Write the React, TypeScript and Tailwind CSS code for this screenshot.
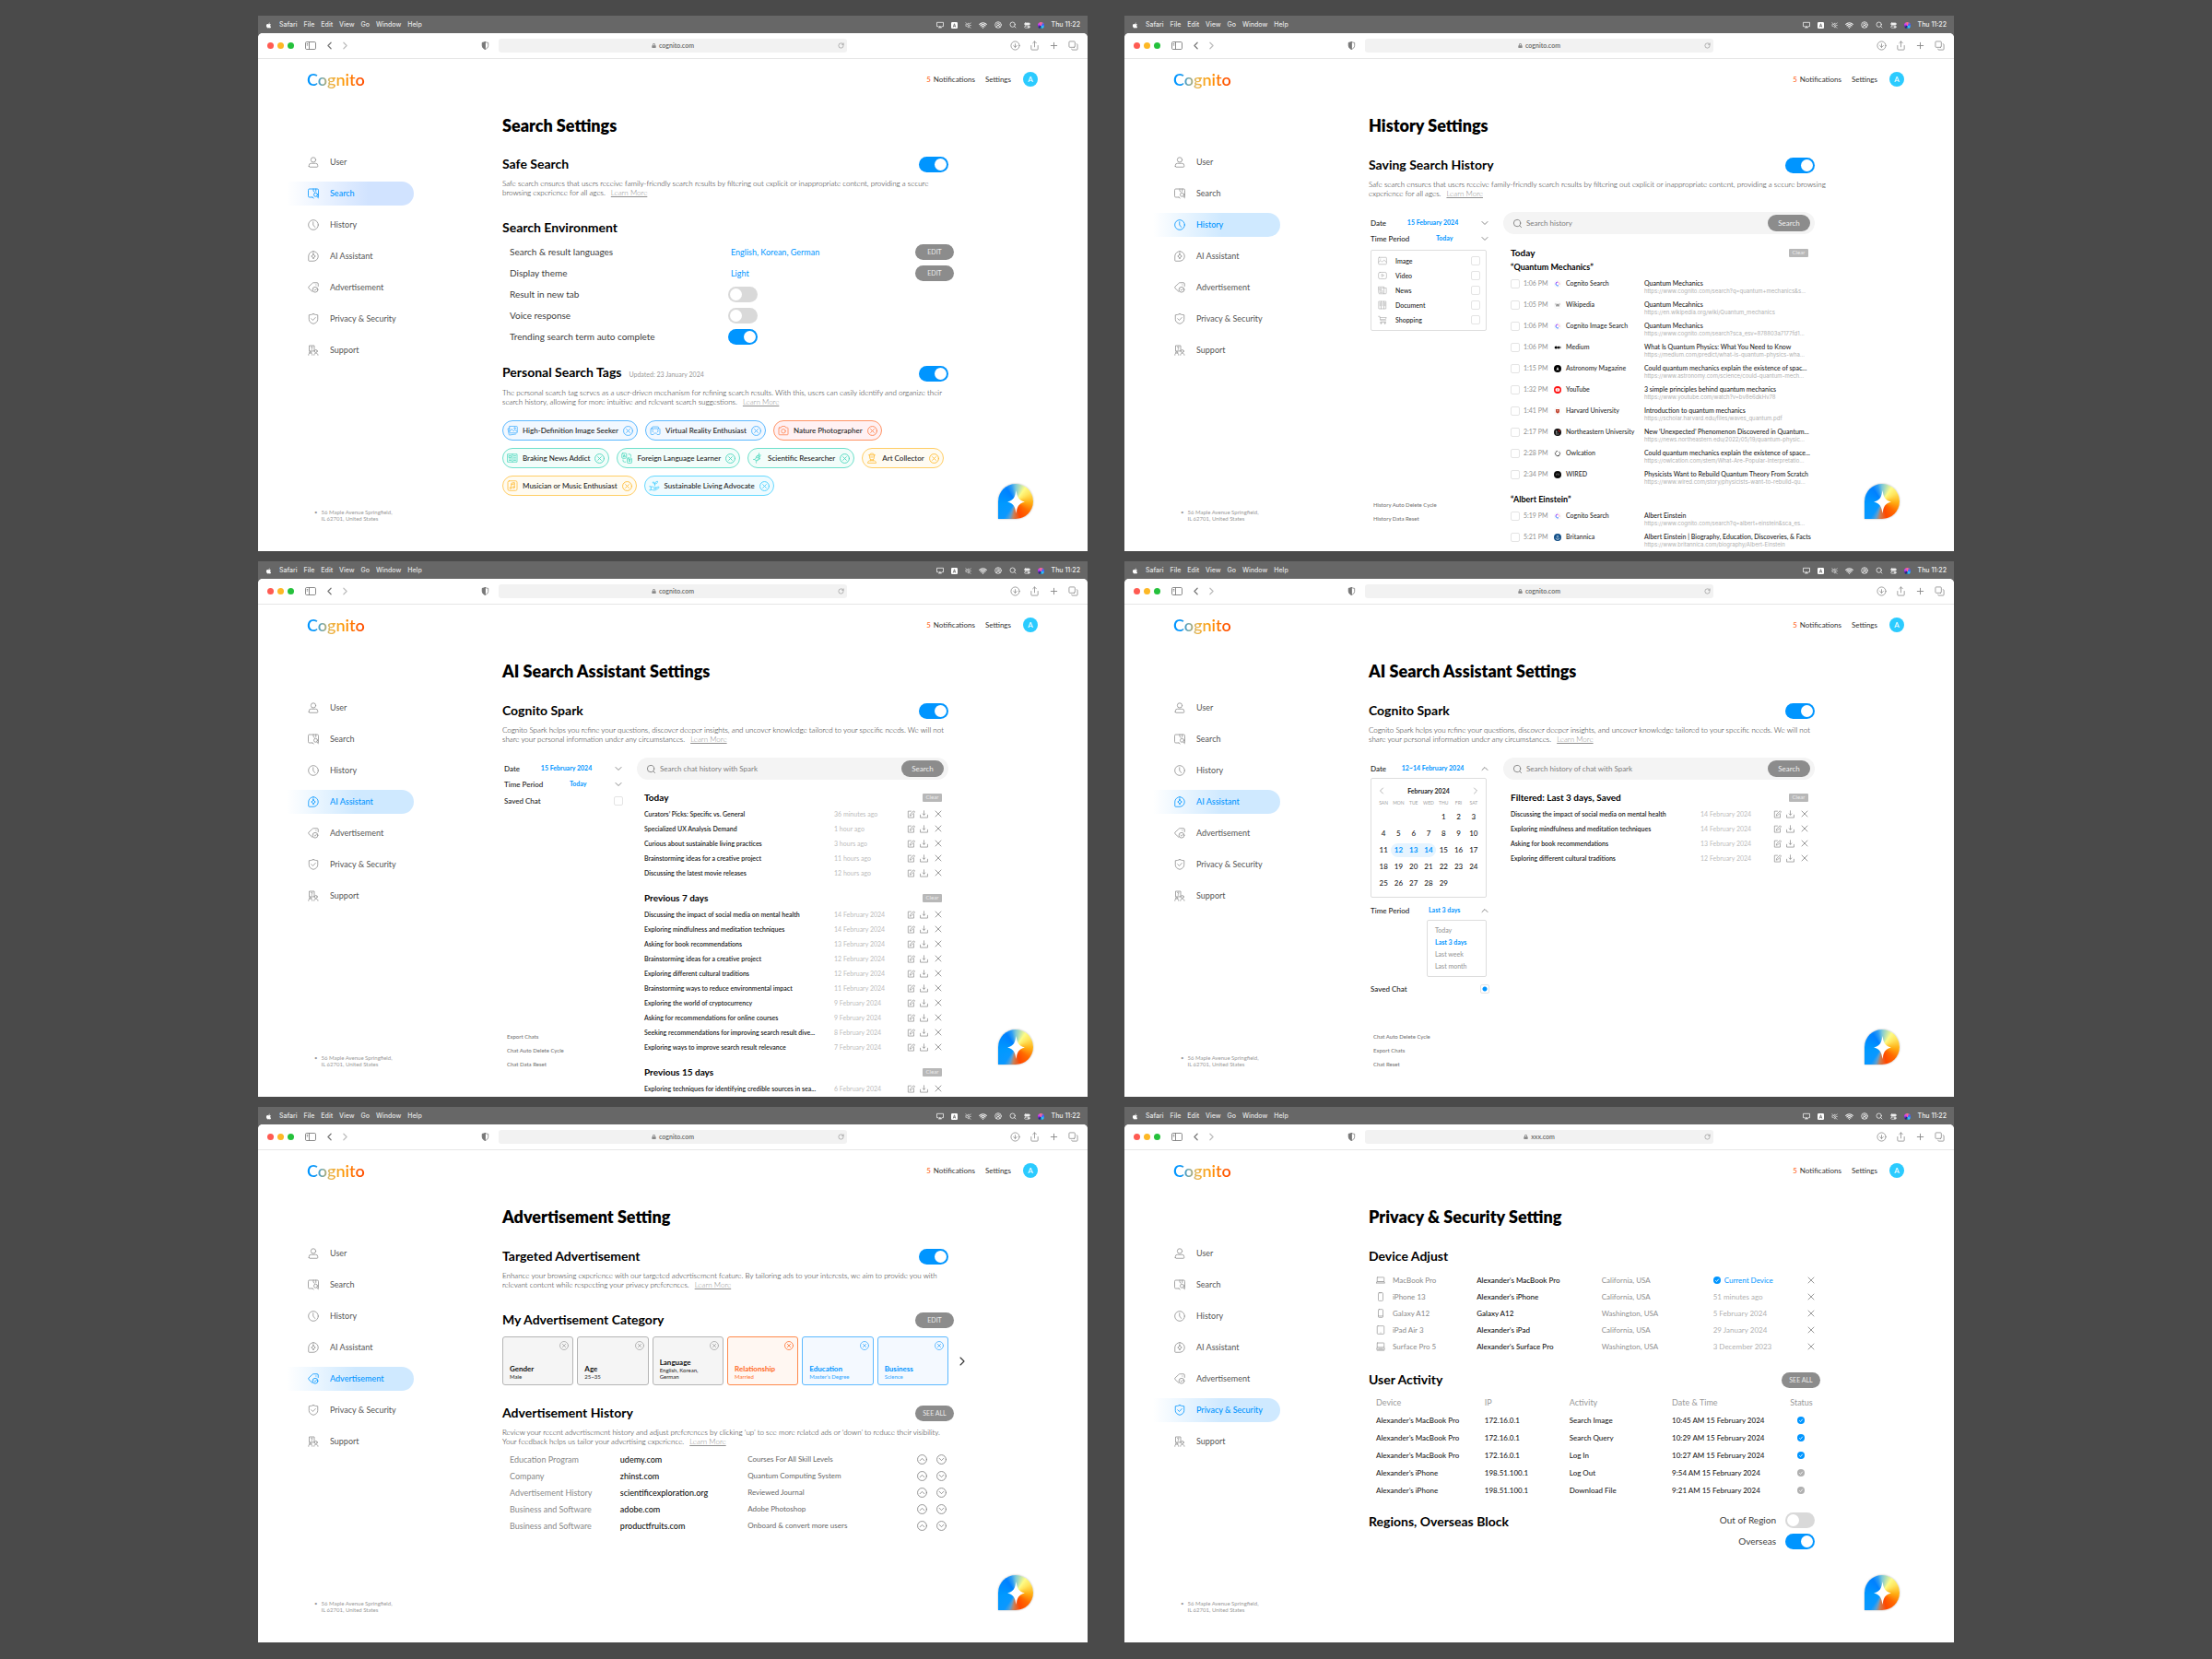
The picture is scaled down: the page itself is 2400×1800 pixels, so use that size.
import React, { useId } from "react";
import {
  ChevronDown,
  ChevronLeft,
  ChevronRight,
  ChevronUp,
  CircleArrowDown,
  CircleUserRound,
  Copy,
  Plus,
  RotateCw,
  Search,
  Share,
  Wifi,
  X,
} from "lucide-react";
import { FaApple, FaLock } from "react-icons/fa";

type IconProps = { className?: string };

function Line({ className = "", width = 1.6, children }: IconProps & { width?: number; children: React.ReactNode }) {
  return (
    <svg
      viewBox="0 0 24 24"
      className={`shrink-0 ${className}`}
      fill="none"
      stroke="currentColor"
      strokeWidth={width}
      strokeLinecap="round"
      strokeLinejoin="round"
      aria-hidden="true"
    >
      {children}
    </svg>
  );
}

/* ---------- sidebar icons ---------- */

const UserIcon = (p: IconProps) => (
  <Line {...p}>
    <circle cx="12" cy="6.8" r="5.3" />
    <path d="M2.5 21v-2a4.5 4.5 0 0 1 4.5-4.5h10A4.5 4.5 0 0 1 21.5 19v2a1.5 1.5 0 0 1-1.5 1.500H4A1.5 1.5 0 0 1 2.5 21Z" />
  </Line>
);
const BookSearchIcon = (p: IconProps) => (
  <Line {...p}>
    <path d="M10 20H3.500a2.500 2.500 0 0 1-2.500-2.500v-13A2.500 2.500 0 0 1 3.500 2h17A2.500 2.500 0 0 1 23 4.500V19" />
    <path d="M12 2v4.500l2.500 2M17.500 2v5M10 20l2.500 2" />
    <circle cx="17" cy="14.500" r="4" />
    <path d="m20 18 3 4" />
  </Line>
);
const ClockIcon = (p: IconProps) => (
  <Line {...p}>
    <circle cx="12" cy="12" r="10.7" />
    <path d="M11.5 5.500V12l4 5" />
  </Line>
);
const SparkChatIcon = (p: IconProps) => (
  <Line {...p}>
    <path d="M12 1.500a10.500 10.500 0 1 1 0 21H3a1.500 1.500 0 0 1-1.500-1.500v-9A10.500 10.500 0 0 1 12 1.500Z" />
    <path d="m12 6 1.800 4.200L16.500 12l-2.700 1.800L12 18l-1.800-4.200L7.500 12l2.700-1.800Z" />
  </Line>
);
const TagIcon = (p: IconProps) => (
  <Line {...p}>
    <path d="M9.500 20.500 2 13.500a2.500 2.500 0 0 1 0-3.500l7.500-7A4 4 0 0 1 12.500 1.500H20A2.500 2.500 0 0 1 22.500 4v5" />
    <circle cx="16" cy="16.500" r="5.800" />
    <path d="m13.800 16.500 1.700 1.700 3-3.200M17.500 6h.6" />
  </Line>
);
const ShieldIcon = (p: IconProps) => (
  <Line {...p}>
    <path d="M12 1.300c3 1.400 6 2 9.500 2.200v9.300c0 4.900-3.800 8.200-9.500 9.900-5.700-1.700-9.500-5-9.500-9.900V3.500C6 3.300 9 2.700 12 1.300Z" />
    <path d="m7.500 11.500 3.500 3.500 5.500-6" />
  </Line>
);
const SupportIcon = (p: IconProps) => (
  <Line {...p}>
    <path d="M3 13V2h11v11Z" />
    <path d="M7 5a1.600 1.600 0 1 1 1.600 2.200v1.300M8.600 10.500v.1M1.500 22.500c0-3 1.500-4.500 4-4.500s4 1.500 4 4.500M3.500 18v-2.500h4V18M13.500 22.500c0-2.500 1.500-4 4-4s4.500 1.500 4.500 4" />
    <circle cx="17.500" cy="14" r="3" />
  </Line>
);

const NAV = [
  { name: "User", icon: UserIcon },
  { name: "Search", icon: BookSearchIcon },
  { name: "History", icon: ClockIcon },
  { name: "AI Assistant", icon: SparkChatIcon },
  { name: "Advertisement", icon: TagIcon },
  { name: "Privacy & Security", icon: ShieldIcon },
  { name: "Support", icon: SupportIcon },
];

/* ---------- shared controls ---------- */

function Toggle({ label, on = false }: { label: string; on?: boolean }) {
  return (
    <input
      type="checkbox"
      role="switch"
      aria-label={label}
      defaultChecked={on}
      className="h-[17px] w-8 shrink-0 cursor-pointer appearance-none rounded-full bg-[#d9d9d9] p-[2px] before:block before:size-[13px] before:rounded-full before:bg-white before:content-[''] checked:bg-[#0095ff] checked:before:ml-[15px]"
    />
  );
}

function Tick({ label, on = false }: { label: string; on?: boolean }) {
  return (
    <input
      type="checkbox"
      aria-label={label}
      defaultChecked={on}
      className="size-[10px] shrink-0 cursor-pointer appearance-none rounded-[2px] border border-[#e4e4e4] bg-white checked:bg-[radial-gradient(circle,#0095ff_2px,transparent_3px)]"
    />
  );
}

function PillButton({ children }: { children: React.ReactNode }) {
  return (
    <button className="-mr-[6px] h-[17px] w-[42px] rounded-full bg-[#8c8c8c] text-[7px] leading-none text-[#ebebeb]">
      {children}
    </button>
  );
}

function ClearButton() {
  return <button className="h-[9px] w-[21px] rounded-[1px] bg-[#b8b8b8] text-[6px] leading-none text-[#ececec]">Clear</button>;
}

function SectionHead({
  title,
  note,
  className = "mt-[21px]",
  children,
}: {
  title: string;
  note?: string;
  className?: string;
  children?: React.ReactNode;
}) {
  return (
    <div className={`flex h-[18px] items-center justify-between ${className}`}>
      <h2 className="text-[14px] font-bold leading-[18px] text-black">
        {title}
        {note && <span className="ml-2 text-[7px] font-normal text-[#999]">{note}</span>}
      </h2>
      {children}
    </div>
  );
}

function Blurb({ lines, className = "mt-[7px]" }: { lines: [string, string]; className?: string }) {
  return (
    <p className={`text-[8px] font-light leading-[10px] text-[#1a1a1a] ${className}`}>
      <span className="block whitespace-nowrap">{lines[0]}</span>
      <span className="flex gap-[6px]">
        {lines[1]}
        <a href="#learn-more" className="text-[#909090] underline">
          Learn More
        </a>
      </span>
    </p>
  );
}

/* ---------- window chrome ---------- */

function MenuBar() {
  return (
    <div className="flex h-[19px] items-center bg-[#676767] pl-2 pr-2 pt-px font-['Inter',sans-serif] text-[7px] font-medium text-[#e4e4e4]">
      <FaApple className="mr-[8px] size-[7px] text-white" aria-hidden="true" />
      <nav aria-label="Menu bar" className="flex gap-[7px]">
        {["Safari", "File", "Edit", "View", "Go", "Window", "Help"].map((m) => (
          <button key={m}>{m}</button>
        ))}
      </nav>
      <div className="ml-auto flex items-center gap-2 text-[#f0f0f0]">
        <Line className="size-[8px]" width={2.4}>
          <path d="M6 17H1.500V4h21v13H18" />
          <path d="m8 20 4-4 4 4Z" fill="currentColor" />
        </Line>
        <svg viewBox="0 0 14 14" className="size-[7px]" aria-hidden="true">
          <rect width="14" height="14" rx="2.500" fill="#fff" />
          <path d="m4.500 11 2.500-7.500L9.500 11M5.500 8.500h3" fill="none" stroke="#676767" strokeWidth="1.600" />
        </svg>
        <Line className="size-[7px]" width={2}>
          <path d="M3 9v6h4l7 6V3L7 9ZM3 2l18 20M17 7l5-4M18 12h4" />
        </Line>
        <Wifi className="size-[9px]" strokeWidth={3} />
        <CircleUserRound className="size-[8px]" strokeWidth={2.400} />
        <Search className="size-[8px]" strokeWidth={2.400} />
        <Line className="size-[7px]" width={2.200}>
          <rect x="2" y="3" width="20" height="7.500" rx="3.700" fill="currentColor" />
          <rect x="2" y="14" width="20" height="7.500" rx="3.700" />
          <circle cx="17" cy="17.700" r="2.500" fill="currentColor" />
        </Line>
        <span className="size-[7px] rounded-full bg-[conic-gradient(#ff6b8b,#3d5bff,#2ed3ff,#1b1f6b,#c23bff,#ff6b8b)]" />
        <time>Thu 11:22</time>
      </div>
    </div>
  );
}

function Toolbar({ url }: { url: string }) {
  return (
    <div className="flex h-7 items-center border-b border-[#e6e6e6] bg-white">
      <div className="flex flex-1 items-center pl-[10px] text-[#777]">
        <div className="flex gap-1">
          <span className="size-[7px] rounded-full bg-[#ff5b52]" />
          <span className="size-[7px] rounded-full bg-[#fdb826]" />
          <span className="size-[7px] rounded-full bg-[#25c13c]" />
        </div>
        <button aria-label="Show sidebar" className="ml-3">
          <svg viewBox="0 0 24 18" className="h-[9px] w-[12px]" fill="none" stroke="currentColor" strokeWidth="1.700" aria-hidden="true">
            <rect x="1" y="1" width="22" height="16" rx="2.500" />
            <path d="M9 1v16M3.500 5h3M3.500 8h3" />
          </svg>
        </button>
        <button aria-label="Back" className="ml-[8px]">
          <ChevronLeft className="size-[13px]" strokeWidth={2.200} />
        </button>
        <button aria-label="Forward" className="ml-1 text-[#bdbdbd]">
          <ChevronRight className="size-[13px]" strokeWidth={2.200} />
        </button>
        <button aria-label="Privacy report" className="ml-auto mr-[10px]">
          <Line className="size-[9px]" width={2}>
            <path d="M12 1.500c3 1.500 6 2 8.500 2.200V12c0 5-3.500 8.500-8.500 10.500C7 20.500 3.500 17 3.500 12V3.700C6 3.500 9 3 12 1.500Z" />
            <path d="M12 1.500v21C7 20.500 3.500 17 3.500 12V3.700C6 3.500 9 3 12 1.500Z" fill="currentColor" />
          </Line>
        </button>
      </div>
      <div className="relative w-[42%] shrink-0">
        <div className="flex h-[15px] items-center justify-center gap-[3px] rounded-[3px] bg-[#f2f2f2] text-[7px] text-[#666]">
          <FaLock className="size-[5px] text-[#8a8a8a]" aria-hidden="true" />
          <span className="font-semibold">{url}</span>
        </div>
        <button aria-label="Reload" className="absolute right-[3px] top-[4px]">
          <RotateCw className="size-[7px] text-[#888]" strokeWidth={2} />
        </button>
      </div>
      <div className="flex flex-1 items-center justify-end gap-[10px] pr-[10px] text-[#888]">
        <button aria-label="Downloads"><CircleArrowDown className="size-[11px]" strokeWidth={1.700} /></button>
        <button aria-label="Share"><Share className="size-[11px]" strokeWidth={1.700} /></button>
        <button aria-label="New tab"><Plus className="size-[11px]" strokeWidth={2} /></button>
        <button aria-label="Tab overview"><Copy className="size-[11px] -scale-x-100 -scale-y-100" strokeWidth={1.700} /></button>
      </div>
    </div>
  );
}

function SparkButton() {
  return (
    <button
      aria-label="Open Cognito Spark"
      className="absolute bottom-[35px] right-[59px] flex size-[38px] items-center justify-center rounded-full rounded-bl-[3px] bg-[conic-gradient(from_0deg,#7cc8d8_0deg,#fdfb86_35deg,#ffe45c_60deg,#ffae12_95deg,#ff6a00_130deg,#ff4800_165deg,#c98058_188deg,#5f9fd0_200deg,#0a98ff_215deg,#0099ff_260deg,#0080ff_325deg,#2f9df2_345deg,#7cc8d8_360deg)] shadow-[0_0_2px_rgba(0,0,0,0.35)]"
    >
      <svg viewBox="0 0 24 32" className="h-[25px] w-[19px]" aria-hidden="true">
        <path d="M12 0c1.500 9 3 13.500 12 16-9 2.500-10.500 7-12 16-1.500-9-3-13.500-12-16C9 13.500 10.500 9 12 0Z" fill="#fff" />
      </svg>
    </button>
  );
}

function activeTone(name: string) {
  return name === "Search" ? "bg-linear-[90deg,#ffffff_2%,#d1e3ff_65%]" : "bg-linear-[90deg,#ffffff_2%,#cfe9ff_55%]";
}

function BrowserWindow({
  active,
  title,
  url = "cognito.com",
  children,
}: {
  active: string;
  title: string;
  url?: string;
  children: React.ReactNode;
}) {
  return (
    <section aria-label={title} className="relative flex flex-col overflow-hidden bg-[#676767]">
      <MenuBar />
      <div className="flex grow flex-col overflow-hidden rounded-t-[5px] bg-white">
        <Toolbar url={url} />
        <header className="flex h-[45px] shrink-0 items-center pb-px pl-[53px] pr-[54px]">
          <a
            href="#home"
            className="bg-linear-[90deg,#0095ff_12%,#e9b752_40%,#ff9800_65%,#ff5000_92%] bg-clip-text pb-px text-[18px] font-semibold leading-[24px] text-transparent"
          >
            Cognito
          </a>
          <nav aria-label="Account" className="ml-auto flex items-center text-[8px] text-[#333]">
            <a href="#notifications">
              <span className="mr-[3px] font-medium text-[#ff6a1f]">5</span>Notifications
            </a>
            <a href="#settings" className="ml-[11px]">
              Settings
            </a>
            <button aria-label="Account A" className="ml-[13px] size-4 rounded-full bg-[#2bcbff] text-[8px] font-medium leading-none text-white">
              A
            </button>
          </nav>
        </header>
        <div className="grid grow grid-cols-[265fr_484fr_151fr]">
          <aside className="flex flex-col items-start pb-8 pl-7 pt-[54px]">
            <nav aria-label="Settings sections" className="flex w-[141px] flex-col gap-2">
              {NAV.map(({ name, icon: Icon }) => (
                <a
                  key={name}
                  href={`#${name.toLowerCase().replace(/\W+/g, "-")}`}
                  aria-current={name === active ? "page" : undefined}
                  className={`flex h-[26px] items-center gap-3 rounded-r-full pl-[26px] text-[9px] ${
                    name === active ? `font-medium text-[#0095ff] ${activeTone(name)}` : "text-[#555]"
                  }`}
                >
                  <Icon className={name === active ? "size-3" : "size-3 text-[#8f8f8f]"} />
                  {name}
                </a>
              ))}
            </nav>
            <address className="mt-auto flex pl-[33px] text-[6px] not-italic leading-[7px] text-[#999]">
              <span className="mr-[4px]">•</span>
              <span>
                56 Maple Avenue Springfield,
                <br />
                IL 62701, United States
              </span>
            </address>
          </aside>
          <main className="flex min-w-0 flex-col pt-[15px]">
            <h1 className="text-[18px] font-extrabold leading-[24px] text-black">{title}</h1>
            {children}
          </main>
        </div>
      </div>
      <SparkButton />
    </section>
  );
}

/* ---------- search settings ---------- */

const TONES = {
  blue: { box: "border-[#5db9ff] bg-[#f2f8ff]", ink: "text-[#4db2ff]" },
  red: { box: "border-[#ff9466] bg-[#fff1f3]", ink: "text-[#ff8450]" },
  green: { box: "border-[#6ee0cb] bg-[#f2fdfa]", ink: "text-[#4dd8be]" },
  amber: { box: "border-[#ffce66] bg-[#fffbf1]", ink: "text-[#ffbd38]" },
  cyan: { box: "border-[#66d9ff] bg-[#effbff]", ink: "text-[#48cfff]" },
};

const TAGS: { name: string; tone: keyof typeof TONES; art: React.ReactNode }[] = [
  {
    name: "High-Definition Image Seeker",
    tone: "blue",
    art: (
      <>
        <path d="M6 3h15a1.500 1.500 0 0 1 1.500 1.500V16a1.500 1.500 0 0 1-1.500 1.500H7A1.500 1.500 0 0 1 5.500 16V3.500M5.500 7 2 8l2.500 13a1 1 0 0 0 1 1L19 20M6 14l4.500-5 4 4.500 3-3 4.500 4" />
        <circle cx="17" cy="7" r="1.500" />
      </>
    ),
  },
  {
    name: "Virtual Reality Enthusiast",
    tone: "blue",
    art: (
      <>
        <path d="M5 8V6a2 2 0 0 1 2-2h10a2 2 0 0 1 2 2v2M3.500 8h17A1.500 1.500 0 0 1 22 9.500V19a2 2 0 0 1-2 2h-4l-4-4-4 4H4a2 2 0 0 1-2-2V9.500A1.500 1.500 0 0 1 3.500 8Z" />
        <path d="m7 11-1.500 2.500L8 16M17 11l1.500 2.500L16 16" />
      </>
    ),
  },
  {
    name: "Nature Photographer",
    tone: "red",
    art: (
      <>
        <path d="M3.500 6H7l1.500-3h7L17 6h3.500A1.500 1.500 0 0 1 22 7.500V20a1.500 1.500 0 0 1-1.500 1.500h-17A1.500 1.500 0 0 1 2 20V7.500A1.500 1.500 0 0 1 3.500 6Z" />
        <circle cx="12" cy="13.500" r="4.500" />
      </>
    ),
  },
  {
    name: "Braking News Addict",
    tone: "green",
    art: <path d="M2 3.500h20v17H2Zm10 0v17M5 7h4v4H5Zm0 7h4M5 17h4M15 7h4M15 10.500h4M15 14h4M15 17h4" />,
  },
  {
    name: "Foreign Language Learner",
    tone: "green",
    art: (
      <>
        <rect x="1.500" y="1.500" width="10" height="11" rx="2" />
        <rect x="13" y="12" width="10" height="11" rx="2" />
        <path d="M4.500 9.500 6.500 4.500l2 5M5 8h3M16 15.500h4M18 14.500v1M16.500 20l3-4.500M17 17.500l3 2.500M16 3.500h2a3 3 0 0 1 3 3v2M4 16v1.500a3 3 0 0 0 3 3h2.500" />
      </>
    ),
  },
  {
    name: "Scientific Researcher",
    tone: "green",
    art: <path d="M15 1.500c-2 5 3 7 0 11s-8 4-6 10M19 6c-5-1-9 0-10 4s-2 5-6 5M9 10l9 3c-3 1-4 4-8 5l-5-3M11 7l6 2" />,
  },
  {
    name: "Art Collector",
    tone: "amber",
    art: <path d="M5 5.500h14M7 5.500C7 3 9 2 12 2s5 1 5 3.500V11a5 5 0 0 1-10 0ZM9.500 15v3M14.500 15v3M3 22c0-3 2.500-4.500 6.500-4.500h5c4 0 6.500 1.500 6.500 4.500ZM9 10h6" />,
  },
  {
    name: "Musician or Music Enthusiast",
    tone: "amber",
    art: (
      <>
        <rect x="2" y="1.500" width="20" height="21" rx="3" />
        <path d="M9.500 16.500V6.500l7-1.500v10M9.500 9.500l7-1.500" />
        <circle cx="7.800" cy="17" r="1.800" />
        <circle cx="14.800" cy="15.500" r="1.800" />
      </>
    ),
  },
  {
    name: "Sustainable Living Advocate",
    tone: "cyan",
    art: <path d="M1.500 13.500h3v8h-3M4.500 15c3-1.500 5-1 7 1h3.500c2 0 1.500 2.500-.5 2.500H11M15 16.500l5-2c2-.5 3 1 1.500 2.500l-7 4.500c-3 1-6 .5-10-1.500M13 12V8c-3 0-4.500-1.500-4.500-4 3 0 4.500 1.500 4.500 4 0-3 2-5 6-5.500 0 4-2 5.500-6 5.500" />,
  },
];

function CloseRing({ className = "" }: IconProps) {
  return (
    <Line className={className} width={2}>
      <circle cx="12" cy="12" r="10.800" />
      <path d="m8 8 8 8M16 8l-8 8" />
    </Line>
  );
}

function EnvRow({ label, children, edit }: { label: string; children: React.ReactNode; edit?: boolean }) {
  return (
    <li className="grid h-[23px] grid-cols-[245fr_239fr] items-center">
      <span className="pl-2 text-[10px] text-[#3c3c3c]">{label}</span>
      <span className="flex items-center justify-between text-[9px] text-[#0095ff]">
        {children}
        {edit && <PillButton>EDIT</PillButton>}
      </span>
    </li>
  );
}

function SearchSettings() {
  return (
    <BrowserWindow active="Search" title="Search Settings">
      <SectionHead title="Safe Search">
        <Toggle label="Safe Search" on />
      </SectionHead>
      <Blurb
        lines={[
          "Safe search ensures that users receive family-friendly search results by filtering out explicit or inappropriate content, providing a secure",
          "browsing experience for all ages.",
        ]}
      />
      <SectionHead title="Search Environment" className="mt-6" />
      <ul className="mt-[6px]">
        <EnvRow label="Search & result languages" edit>
          <span className="pl-[3px]">English, Korean, German</span>
        </EnvRow>
        <EnvRow label="Display theme" edit>
          <span className="pl-[3px]">Light</span>
        </EnvRow>
        <EnvRow label="Result in new tab">
          <Toggle label="Result in new tab" />
        </EnvRow>
        <EnvRow label="Voice response">
          <Toggle label="Voice response" />
        </EnvRow>
        <EnvRow label="Trending search term auto complete">
          <Toggle label="Trending search term auto complete" on />
        </EnvRow>
      </ul>
      <SectionHead title="Personal Search Tags" note="Updated: 23 January 2024" className="mt-[19px]">
        <Toggle label="Personal Search Tags" on />
      </SectionHead>
      <Blurb
        lines={[
          "The personal search tag serves as a user-driven mechanism for refining search results. With this, users can easily identify and organize their",
          "search history, allowing for more intuitive and relevant search suggestions.",
        ]}
      />
      <ul className="mt-[15px] flex flex-wrap gap-2">
        {TAGS.map(({ name, tone, art }) => (
          <li key={name} className={`flex h-[22px] items-center rounded-full border pl-1 pr-1 text-[8px] font-medium text-[#1c1c1c] ${TONES[tone].box}`}>
            <Line className={`mr-[5px] size-3 ${TONES[tone].ink}`} width={1.600}>
              {art}
            </Line>
            {name}
            <button aria-label={`Remove ${name}`} className={`ml-[5px] ${TONES[tone].ink}`}>
              <CloseRing className="size-[11px]" />
            </button>
          </li>
        ))}
      </ul>
    </BrowserWindow>
  );
}

/* ---------- filters and list pieces ---------- */

function FilterColumn({ links, children }: { links: string[]; children: React.ReactNode }) {
  return (
    <div className="flex flex-col pb-[28px] pl-[2px] pt-[3px] text-[8px] text-[#222]">
      {children}
      <div className="mt-auto flex flex-col items-start pl-[3px] text-[6px] font-medium leading-[15px] text-[#777]">
        {links.map((l) => (
          <button key={l}>{l}</button>
        ))}
      </div>
    </div>
  );
}

function DropRow({ label, value, open = false }: { label: string; value: string; open?: boolean }) {
  const id = useId();
  const Chevron = open ? ChevronUp : ChevronDown;
  return (
    <div className="flex h-[17px] items-center justify-between font-medium">
      <span id={id}>{label}</span>
      <button aria-labelledby={id} aria-expanded={open} className="-mr-[2px] flex flex-1 items-center text-[7px] font-bold text-[#0095ff]">
        <span className="flex-1">{value}</span>
        <Chevron className="size-[12px] text-[#888]" strokeWidth={2} />
      </button>
    </div>
  );
}

function PeriodSelect() {
  const id = useId();
  return (
    <div className="flex h-[17px] items-center font-medium">
      <label htmlFor={id}>Time Period</label>
      <select
        id={id}
        className="h-[15px] min-w-0 flex-1 appearance-none bg-transparent text-[7px] font-bold text-[#0095ff] [text-align-last:center]"
      >
        <option>Today</option>
        <option>Last 3 days</option>
        <option>Last week</option>
        <option>Last month</option>
      </select>
      <ChevronDown className="-mr-[2px] size-[12px] text-[#888]" strokeWidth={2} />
    </div>
  );
}

function SearchBox({ placeholder }: { placeholder: string }) {
  return (
    <form role="search" className="flex h-6 items-center rounded-full bg-[#f4f4f4] pl-[10px] pr-[5px]" onSubmit={(e) => e.preventDefault()}>
      <Search className="size-[11px] text-[#777]" strokeWidth={1.800} />
      <input
        type="search"
        aria-label={placeholder}
        placeholder={placeholder}
        className="ml-1 min-w-0 flex-1 bg-transparent text-[8px] text-[#333] outline-none placeholder:text-[#7d7d7d]"
      />
      <button className="h-[18px] w-[46px] rounded-full bg-[#8c8c8c] text-[8px] leading-none text-[#f0f0f0]">Search</button>
    </form>
  );
}

function ListHead({ title, className = "" }: { title: string; className?: string }) {
  return (
    <div className={`flex h-3 items-center justify-between ${className}`}>
      <h3 className="text-[10px] font-bold leading-3 text-black">{title}</h3>
      <ClearButton />
    </div>
  );
}

/* ---------- history settings ---------- */

const KINDS = [
  { name: "Image", art: <><rect x="1.500" y="3" width="21" height="18" rx="2" /><path d="m2 15 5-4 4 4 5-5 6 5M6.500 7.500h.5" /></> },
  { name: "Video", art: <><rect x="1.500" y="3.500" width="21" height="17" rx="4" /><path d="M10 9v6l5-3Z" /></> },
  { name: "News", art: <path d="M2 3h14v18H4a2 2 0 0 1-2-2ZM16 6h6v13a2 2 0 0 1-2 2h-4M5 6.500h4v4H5ZM12 6.500h1.500M5 14h8M5 17.500h8" /> },
  { name: "Document", art: <path d="M3 2.500h18v19H3ZM8.500 2.500v19M15.500 2.500v19M5.500 6v8M12 6v8M18.500 6v8" /> },
  { name: "Shopping", art: <><path d="M1.500 3H5l2 11h14M5.500 6H22l-2 5H6.500M6.500 18h14" /><circle cx="8" cy="21" r="1.500" /><circle cx="18" cy="21" r="1.500" /></> },
];

function Favicon({ kind }: { kind: string }) {
  const base = "size-[8px] shrink-0";
  switch (kind) {
    case "cognito":
      return (
        <svg viewBox="0 0 16 16" className={base} aria-hidden="true">
          <circle cx="8" cy="8" r="7.500" fill="#fff" stroke="#eee" />
          <path d="M8 4a4 4 0 0 0-4 4" fill="none" stroke="#8a3bff" strokeWidth="2" />
          <path d="M4 8a4 4 0 0 0 6 3.500" fill="none" stroke="#3f7cff" strokeWidth="2" />
          <path d="M8 4a4 4 0 0 1 3.500 6" fill="none" stroke="#f59ab8" strokeWidth="1.600" />
        </svg>
      );
    case "wikipedia":
      return (
        <svg viewBox="0 0 16 16" className={base} aria-hidden="true">
          <circle cx="8" cy="8" r="7.500" fill="#fff" stroke="#eee" />
          <path d="m3.500 5 2.500 6 2-4 2 4 2.500-6M6 5l2 3 2-3" fill="none" stroke="#666" strokeWidth="1.300" />
        </svg>
      );
    case "medium":
      return (
        <svg viewBox="0 0 16 16" className={base} aria-hidden="true">
          <circle cx="4.500" cy="8" r="3.200" />
          <ellipse cx="10" cy="8" rx="2" ry="3" />
          <ellipse cx="13.700" cy="8" rx="1" ry="2.600" />
        </svg>
      );
    case "astronomy":
      return (
        <svg viewBox="0 0 16 16" className={base} aria-hidden="true">
          <circle cx="8" cy="8" r="8" />
          <path d="m5 12 3-8 3 8-3-2Z" fill="#fff" />
        </svg>
      );
    case "youtube":
      return (
        <svg viewBox="0 0 16 16" className={base} aria-hidden="true">
          <circle cx="8" cy="8" r="8" fill="#f11" />
          <rect x="3.500" y="4.500" width="9" height="7" rx="2" fill="#fff" />
          <path d="M7 6.300v3.400L10 8Z" fill="#f11" />
        </svg>
      );
    case "harvard":
      return (
        <svg viewBox="0 0 16 16" className={base} aria-hidden="true">
          <circle cx="8" cy="8" r="7.500" fill="#fff" stroke="#eee" />
          <path d="M4 4h8v5c0 2-2 3.300-4 4-2-.7-4-2-4-4Z" fill="#c0432f" />
          <path d="M6 7h4M8 5v5" stroke="#e8b5a5" />
        </svg>
      );
    case "northeastern":
      return (
        <svg viewBox="0 0 16 16" className={base} aria-hidden="true">
          <circle cx="8" cy="8" r="8" fill="#111" />
          <path d="M5 11V5l3 4M4 12h7" stroke="#ddd" fill="none" />
          <path d="M9 4h3v4" stroke="#e22" strokeWidth="1.500" fill="none" />
        </svg>
      );
    case "owlcation":
      return (
        <svg viewBox="0 0 16 16" className={base} aria-hidden="true">
          <circle cx="8" cy="8" r="7.500" fill="#fff" stroke="#eee" />
          <path d="M10.500 4a5 5 0 1 1-5 0M5 3h3M8 13h3" fill="none" stroke="#333" strokeWidth="1.500" />
        </svg>
      );
    case "wired":
      return (
        <svg viewBox="0 0 16 16" className={base} aria-hidden="true">
          <circle cx="8" cy="8" r="8" fill="#0a0a0a" />
          <path d="M5 6v4M8 6v4M11 6v4M5 6h6" stroke="#777" fill="none" />
        </svg>
      );
    default:
      return (
        <svg viewBox="0 0 16 16" className={base} aria-hidden="true">
          <circle cx="8" cy="8" r="8" fill="#0f4c86" />
          <path d="M8 3v10M4 9a4 4 0 0 0 8 0M5 6h6" stroke="#cfe0f0" strokeWidth="1.200" fill="none" />
        </svg>
      );
  }
}

type Visit = { time: string; icon: string; site: string; title: string; url: string };

const QUANTUM: Visit[] = [
  { time: "1:06 PM", icon: "cognito", site: "Cognito Search", title: "Quantum Mechanics", url: "https://www.cognito.com/search?q=quantum+mechanics&s..." },
  { time: "1:05 PM", icon: "wikipedia", site: "Wikipedia", title: "Quantum Mecahnics", url: "https://en.wikipedia.org/wiki/Quantum_mechanics" },
  { time: "1:06 PM", icon: "cognito", site: "Cognito Image Search", title: "Quantum Mechanics", url: "https://www.cognito.com/search?sca_esv=878803a7177fd1..." },
  { time: "1:06 PM", icon: "medium", site: "Medium", title: "What Is Quantum Physics: What You Need to Know", url: "https://medium.com/predict/what-is-quantum-physics-wha..." },
  { time: "1:15 PM", icon: "astronomy", site: "Astronomy Magazine", title: "Could quantum mechanics explain the existence of spac...", url: "https://www.astronomy.com/science/could-quantum-mech..." },
  { time: "1:32 PM", icon: "youtube", site: "YouTube", title: "3 simple principles behind quantum mechanics", url: "https://www.youtube.com/watch?v=bv8e6dkHv78" },
  { time: "1:41 PM", icon: "harvard", site: "Harvard University", title: "Introduction to quantum mechanics", url: "https://scholar.harvard.edu/files/waves_quantum.pdf" },
  { time: "2:17 PM", icon: "northeastern", site: "Northeastern University", title: "New ‘Unexpected’ Phenomenon Discovered in Quantum...", url: "https://news.northeastern.edu/2022/05/19/quantum-physic..." },
  { time: "2:28 PM", icon: "owlcation", site: "Owlcation", title: "Could quantum mechanics explain the existence of space...", url: "https://owlcation.com/stem/What-Are-Popular-Interpretatio..." },
  { time: "2:34 PM", icon: "wired", site: "WIRED", title: "Physicists Want to Rebuild Quantum Theory From Scratch", url: "https://www.wired.com/story/physicists-want-to-rebuild-qu..." },
];

const EINSTEIN: Visit[] = [
  { time: "5:19 PM", icon: "cognito", site: "Cognito Search", title: "Albert Einstein", url: "https://www.cognito.com/search?q=albert+einstein&sca_es..." },
  { time: "5:21 PM", icon: "britannica", site: "Britannica", title: "Albert Einstein | Biography, Education, Discoveries, & Facts", url: "https://www.britannica.com/biography/Albert-Einstein" },
];

function VisitGroup({ query, visits, className }: { query: string; visits: Visit[]; className: string }) {
  return (
    <div className={className}>
      <h4 className="text-[9px] font-bold leading-3 text-black">“{query}”</h4>
      <ul className="mt-[7px] flex flex-col gap-[6px]">
        {visits.map((v) => (
          <li key={v.time + v.site} className="grid h-[17px] grid-cols-[14px_33px_98fr_178fr] items-start text-[7px] leading-[9px]">
            <Tick label={`Select ${v.title}`} />
            <span className="whitespace-nowrap text-[#8f8f8f]">{v.time}</span>
            <span className="flex items-center gap-[5px] whitespace-nowrap font-medium text-[#2c2c2c]">
              <Favicon kind={v.icon} />
              {v.site}
            </span>
            <span className="min-w-0 whitespace-nowrap">
              <a href="#visit" className="block font-medium text-[#1c1c1c]">
                {v.title}
              </a>
              <span className="block font-['Inter',sans-serif] text-[6px] leading-[8px] text-[#b0b0b0]">{v.url}</span>
            </span>
          </li>
        ))}
      </ul>
    </div>
  );
}

function HistorySettings() {
  return (
    <BrowserWindow active="History" title="History Settings">
      <SectionHead title="Saving Search History" className="mt-[22px]">
        <Toggle label="Saving Search History" on />
      </SectionHead>
      <Blurb
        lines={[
          "Safe search ensures that users receive family-friendly search results by filtering out explicit or inappropriate content, providing a secure browsing",
          "experience for all ages.",
        ]}
      />
      <div className="mt-[15px] grid grow grid-cols-[130fr_338fr] gap-x-4">
        <FilterColumn links={["History Auto Delete Cycle", "History Data Reset"]}>
          <DropRow label="Date" value="15 February 2024" />
          <PeriodSelect />
          <ul className="mr-[2px] mt-1 rounded-[2px] border border-[#ddd] py-[3px] pl-[7px] pr-[6px] text-[7px] font-medium">
            {KINDS.map(({ name, art }) => (
              <li key={name}>
                <label className="flex h-4 items-center">
                  <Line className="mr-[9px] size-[10px] text-[#a5a5a5]" width={1.400}>
                    {art}
                  </Line>
                  <span className="flex-1">{name}</span>
                  <Tick label={name} />
                </label>
              </li>
            ))}
          </ul>
        </FilterColumn>
        <div className="min-w-0">
          <SearchBox placeholder="Search history" />
          <div className="pl-2 pr-[7px]">
            <ListHead title="Today" className="mt-[14px]" />
            <VisitGroup query="Quantum Mechanics" visits={QUANTUM} className="mt-1" />
            <VisitGroup query="Albert Einstein" visits={EINSTEIN} className="mt-[9px]" />
          </div>
        </div>
      </div>
    </BrowserWindow>
  );
}

/* ---------- assistant settings ---------- */

type Chat = [string, string];

const TODAY: Chat[] = [
  ["Curators’ Picks: Specific vs. General", "36 minutes ago"],
  ["Specialized UX Analysis Demand", "1 hour ago"],
  ["Curious about sustainable living practices", "3 hours ago"],
  ["Brainstorming ideas for a creative project", "11 hours ago"],
  ["Discussing the latest movie releases", "12 hours ago"],
];
const WEEK: Chat[] = [
  ["Discussing the impact of social media on mental health", "14 February 2024"],
  ["Exploring mindfulness and meditation techniques", "14 February 2024"],
  ["Asking for book recommendations", "13 February 2024"],
  ["Brainstorming ideas for a creative project", "12 February 2024"],
  ["Exploring different cultural traditions", "12 February 2024"],
  ["Brainstorming ways to reduce environmental impact", "11 February 2024"],
  ["Exploring the world of cryptocurrency", "9 February 2024"],
  ["Asking for recommendations for online courses", "9 February 2024"],
  ["Seeking recommendations for improving search result dive...", "8 February 2024"],
  ["Exploring ways to improve search result relevance", "7 February 2024"],
];
const FORTNIGHT: Chat[] = [["Exploring techniques for identifying credible sources in sea...", "6 February 2024"]];
const FILTERED: Chat[] = [WEEK[0], WEEK[1], WEEK[2], WEEK[4]];

const EditIcon = () => (
  <Line className="size-[9px]" width={1.7}>
    <path d="M12 3H3.500v18.500H20V12M9 15.500l1-4L19.500 2 23 5.500 13 14.500Z" />
  </Line>
);
const SaveIcon = () => (
  <Line className="size-[9px]" width={1.8}>
    <path d="M12 2v12M8.500 10.500 12 14l3.500-3.500M1.500 14v7.500h21V14" />
  </Line>
);

function ChatGroup({ title, chats, className }: { title: string; chats: Chat[]; className: string }) {
  return (
    <div className={className}>
      <ListHead title={title} />
      <ul className="mt-1">
        {chats.map(([name, when]) => (
          <li key={name} className="grid h-4 grid-cols-[206fr_79fr_38fr] items-center text-[7px]">
            <a href="#chat" className="whitespace-nowrap font-semibold text-[#1c1c1c]">
              {name}
            </a>
            <span className="whitespace-nowrap text-[#bcbcbc]">{when}</span>
            <span className="-mr-[2px] flex items-center justify-between text-[#808080]">
              <button aria-label={`Edit ${name}`}><EditIcon /></button>
              <button aria-label={`Download ${name}`}><SaveIcon /></button>
              <button aria-label={`Delete ${name}`}><X className="size-[12px]" strokeWidth={1.600} /></button>
            </span>
          </li>
        ))}
      </ul>
    </div>
  );
}

function SparkIntro() {
  return (
    <>
      <SectionHead title="Cognito Spark" className="mt-[22px]">
        <Toggle label="Cognito Spark" on />
      </SectionHead>
      <Blurb
        lines={[
          "Cognito Spark helps you refine your questions, discover deeper insights, and uncover knowledge tailored to your specific needs. We will not",
          "share your personal information under any circumstances.",
        ]}
      />
    </>
  );
}

function SavedChat({ on = false, className = "" }: { on?: boolean; className?: string }) {
  return (
    <label className={`-mr-[1px] flex h-5 items-center justify-between font-medium ${className}`}>
      Saved Chat
      <Tick label="Saved Chat" on={on} />
    </label>
  );
}

function AssistantSettings() {
  return (
    <BrowserWindow active="AI Assistant" title="AI Search Assistant Settings">
      <SparkIntro />
      <div className="mt-[15px] grid grow grid-cols-[130fr_338fr] gap-x-4">
        <FilterColumn links={["Export Chats", "Chat Auto Delete Cycle", "Chat Data Reset"]}>
          <DropRow label="Date" value="15 February 2024" />
          <PeriodSelect />
          <SavedChat />
        </FilterColumn>
        <div className="min-w-0">
          <SearchBox placeholder="Search chat history with Spark" />
          <div className="pl-2 pr-[7px]">
            <ChatGroup title="Today" chats={TODAY} className="mt-[13px]" />
            <ChatGroup title="Previous 7 days" chats={WEEK} className="mt-[13px]" />
            <ChatGroup title="Previous 15 days" chats={FORTNIGHT} className="mt-[13px]" />
          </div>
        </div>
      </div>
    </BrowserWindow>
  );
}

function Calendar() {
  const weeks = [0, 1, 2, 3, 4].map((w) => [0, 1, 2, 3, 4, 5, 6].map((d) => w * 7 + d - 3));
  return (
    <div className="mr-[2px] mt-[2px] h-[130px] rounded-[2px] border border-[#ddd] px-[5px] pt-[6px]">
      <div className="flex h-[14px] items-center justify-between text-[7px] font-bold">
        <button aria-label="Previous month"><ChevronLeft className="size-[12px] text-[#aaa]" strokeWidth={1.800} /></button>
        February 2024
        <button aria-label="Next month"><ChevronRight className="size-[12px] text-[#aaa]" strokeWidth={1.800} /></button>
      </div>
      <table className="w-full table-fixed border-collapse text-center">
        <thead>
          <tr className="h-[12px] text-[5px] text-[#a0a0a0]">
            {["SAN", "MON", "TUE", "WED", "THU", "FRI", "SAT"].map((d) => (
              <th key={d} scope="col" className="p-0 font-normal leading-none">
                {d}
              </th>
            ))}
          </tr>
        </thead>
        <tbody>
          {weeks.map((days, w) => (
            <tr key={w} className="h-[18px] text-[8px] font-medium">
              {days.map((d) => {
                const picked = d >= 12 && d <= 14;
                return (
                  <td key={d} className="p-0">
                    {d > 0 && d < 30 && (
                      <button
                        className={`block h-[15px] w-full leading-none ${picked ? "bg-[#e6f4ff] font-bold text-[#0095ff]" : ""} ${
                          d === 12 ? "rounded-l-full" : ""
                        } ${d === 14 ? "rounded-r-full" : ""}`}
                      >
                        {d}
                      </button>
                    )}
                  </td>
                );
              })}
            </tr>
          ))}
        </tbody>
      </table>
    </div>
  );
}

function AssistantFiltered() {
  return (
    <BrowserWindow active="AI Assistant" title="AI Search Assistant Settings">
      <SparkIntro />
      <div className="mt-[15px] grid grow grid-cols-[130fr_338fr] gap-x-4">
        <FilterColumn links={["Chat Auto Delete Cycle", "Export Chats", "Chat Reset"]}>
          <DropRow label="Date" value="12~14 February 2024" open />
          <Calendar />
          <div className="mt-[5px]">
            <DropRow label="Time Period" value="Last 3 days" open />
          </div>
          <ul
            role="listbox"
            aria-label="Time Period"
            className="ml-auto mr-[2px] mt-[2px] w-[65px] rounded-[2px] border border-[#ddd] py-1 pl-2 text-[7px] leading-[13px] text-[#999]"
          >
            {["Today", "Last 3 days", "Last week", "Last month"].map((o) => (
              <li key={o} role="option" aria-selected={o === "Last 3 days"} className={o === "Last 3 days" ? "font-bold text-[#0095ff]" : "font-medium"}>
                {o}
              </li>
            ))}
          </ul>
          <SavedChat on className="mt-[3px]" />
        </FilterColumn>
        <div className="min-w-0">
          <SearchBox placeholder="Search history of chat with Spark" />
          <div className="pl-2 pr-[7px]">
            <ChatGroup title="Filtered: Last 3 days, Saved" chats={FILTERED} className="mt-[13px]" />
          </div>
        </div>
      </div>
    </BrowserWindow>
  );
}

/* ---------- advertisement settings ---------- */

const CARD_TONES = {
  gray: { box: "border-[#b5b5b5] bg-[#f5f5f5]", name: "text-[#111]", text: "text-[#333]", ring: "text-[#aaa]" },
  orange: { box: "border-[#ff8a4d] bg-[#fff7f2]", name: "text-[#ff6a1f]", text: "text-[#ff7a3d]", ring: "text-[#ff7a3d]" },
  blue: { box: "border-[#5db9ff] bg-[#f4f9ff]", name: "text-[#0095ff]", text: "text-[#3aabff]", ring: "text-[#4db2ff]" },
};

const CARDS: { name: string; value: string; tone: keyof typeof CARD_TONES }[] = [
  { name: "Gender", value: "Male", tone: "gray" },
  { name: "Age", value: "25~35", tone: "gray" },
  { name: "Language", value: "English, Korean, German", tone: "gray" },
  { name: "Relationship", value: "Married", tone: "orange" },
  { name: "Education", value: "Master’s Degree", tone: "blue" },
  { name: "Business", value: "Science", tone: "blue" },
];

const AD_HISTORY = [
  ["Education Program", "udemy.com", "Courses For All Skill Levels"],
  ["Company", "zhinst.com", "Quantum Computing System"],
  ["Advertisement History", "scientificexploration.org", "Reviewed Journal"],
  ["Business and Software", "adobe.com", "Adobe Photoshop"],
  ["Business and Software", "productfruits.com", "Onboard & convert more users"],
];

function AdvertisementSettings() {
  return (
    <BrowserWindow active="Advertisement" title="Advertisement Setting">
      <SectionHead title="Targeted Advertisement" className="mt-[22px]">
        <Toggle label="Targeted Advertisement" on />
      </SectionHead>
      <Blurb
        lines={[
          "Enhance your browsing experience with our targeted advertisement feature. By tailoring ads to your interests, we aim to provide you with",
          "relevant content while respecting your privacy preferences.",
        ]}
      />
      <SectionHead title="My Advertisement Category" className="mt-6">
        <PillButton>EDIT</PillButton>
      </SectionHead>
      <div className="mt-[9px] flex items-center">
        <ul className="grid w-full shrink-0 grid-cols-6 gap-1">
          {CARDS.map(({ name, value, tone }) => {
            const t = CARD_TONES[tone];
            return (
              <li key={name} className={`flex h-[53px] flex-col rounded-[3px] border pb-[5px] pl-[7px] pr-1 pt-1 ${t.box}`}>
                <button aria-label={`Remove ${name}`} className={`self-end ${t.ring}`}>
                  <CloseRing className="size-[10px]" />
                </button>
                <h3 className={`mt-auto text-[8px] font-bold leading-[10px] ${t.name}`}>{name}</h3>
                <p className={`pr-4 text-[6px] font-medium leading-[7px] ${t.text} ${tone === "blue" ? "whitespace-nowrap" : ""}`}>{value}</p>
              </li>
            );
          })}
        </ul>
        <button aria-label="More categories" className="ml-[7px]">
          <ChevronRight className="size-[16px] text-[#333]" strokeWidth={1.600} />
        </button>
      </div>
      <SectionHead title="Advertisement History">
        <PillButton>SEE ALL</PillButton>
      </SectionHead>
      <Blurb
        lines={[
          "Review your recent advertisement history and adjust preferences by clicking ‘up’ to see more related ads or ‘down’ to reduce their visibility.",
          "Your feedback helps us tailor your advertising experience.",
        ]}
      />
      <table className="mt-[5px] w-full table-fixed border-collapse text-left">
        <colgroup>
          <col className="w-[26%]" />
          <col className="w-[29%]" />
          <col />
          <col className="w-[10%]" />
        </colgroup>
        <tbody>
          {AD_HISTORY.map(([kind, site, what]) => (
            <tr key={site} className="h-[18px] text-[9px] leading-none">
              <td className="p-0 pl-2 text-[#888]">{kind}</td>
              <td className="p-0 pl-[2px] font-medium text-[#111]">{site}</td>
              <td className="p-0 text-[8px] text-[#666]">{what}</td>
              <td className="p-0 pr-[2px]">
                <span className="flex justify-end gap-[10px] text-[#808080]">
                  <button aria-label={`More ads like ${site}`}>
                    <Line className="size-[11px]" width={1.800}>
                      <circle cx="12" cy="12" r="10.800" />
                      <path d="m7 14.500 5-5 5 5" />
                    </Line>
                  </button>
                  <button aria-label={`Fewer ads like ${site}`}>
                    <Line className="size-[11px]" width={1.800}>
                      <circle cx="12" cy="12" r="10.800" />
                      <path d="m7 9.500 5 5 5-5" />
                    </Line>
                  </button>
                </span>
              </td>
            </tr>
          ))}
        </tbody>
      </table>
    </BrowserWindow>
  );
}

/* ---------- privacy settings ---------- */

const LaptopArt = <path d="M4 4.500h16a1 1 0 0 1 1 1V16H3V5.500a1 1 0 0 1 1-1ZM1 19.500h22L21 16H3Z" />;
const PhoneArt = <path d="M8 1.500h8A2 2 0 0 1 18 3.500v17a2 2 0 0 1-2 2H8a2 2 0 0 1-2-2v-17A2 2 0 0 1 8 1.500Zm2 0h4" />;
const AndroidArt = <path d="M8 1.500h8A2 2 0 0 1 18 3.500v17a2 2 0 0 1-2 2H8a2 2 0 0 1-2-2v-17A2 2 0 0 1 8 1.500ZM6 19h12" />;
const TabletArt = <path d="M5 1.500h14A2 2 0 0 1 21 3.500v17a2 2 0 0 1-2 2H5a2 2 0 0 1-2-2v-17A2 2 0 0 1 5 1.500ZM12 19v.2" />;
const SurfaceArt = <path d="M4 2.500h16a1 1 0 0 1 1 1V14H3V3.500a1 1 0 0 1 1-1ZM3 14l-1.500 5.500h21L21 14M3 22h18M7 17h10" />;

const DEVICES = [
  { model: "MacBook Pro", name: "Alexander’s MacBook Pro", place: "California, USA", seen: "", art: LaptopArt },
  { model: "iPhone 13", name: "Alexander’s iPhone", place: "California, USA", seen: "51 minutes ago", art: PhoneArt },
  { model: "Galaxy A12", name: "Galaxy A12", place: "Washington, USA", seen: "5 February 2024", art: AndroidArt },
  { model: "iPad Air 3", name: "Alexander’s iPad", place: "California, USA", seen: "29 January 2024", art: TabletArt },
  { model: "Surface Pro 5", name: "Alexander’s Surface Pro", place: "Washington, USA", seen: "3 December 2023", art: SurfaceArt },
];

const ACTIVITY: [string, string, string, string, boolean][] = [
  ["Alexander’s MacBook Pro", "172.16.0.1", "Search Image", "10:45 AM 15 February 2024", true],
  ["Alexander’s MacBook Pro", "172.16.0.1", "Search Query", "10:29 AM 15 February 2024", true],
  ["Alexander’s MacBook Pro", "172.16.0.1", "Log In", "10:27 AM 15 February 2024", true],
  ["Alexander’s iPhone", "198.51.100.1", "Log Out", "9:54 AM 15 February 2024", false],
  ["Alexander’s iPhone", "198.51.100.1", "Download File", "9:21 AM 15 February 2024", false],
];

function CheckDot({ on = true }: { on?: boolean }) {
  return (
    <svg viewBox="0 0 16 16" className="inline-block size-[8px]" role="img" aria-label={on ? "Active" : "Inactive"}>
      <circle cx="8" cy="8" r="8" fill={on ? "#0095ff" : "#b0b0b0"} />
      <path d="m4.500 8.500 2.500 2.500 4.500-5.500" fill="none" stroke="#fff" strokeWidth="1.600" />
    </svg>
  );
}

function PrivacySettings() {
  return (
    <BrowserWindow active="Privacy & Security" title="Privacy & Security Setting" url="xxx.com">
      <SectionHead title="Device Adjust" className="mt-[22px]" />
      <table className="mt-2 w-full table-fixed border-collapse text-left text-[8px]">
        <colgroup>
          <col className="w-[24%]" />
          <col className="w-[28%]" />
          <col className="w-[25%]" />
          <col />
          <col className="w-[3%]" />
        </colgroup>
        <tbody>
          {DEVICES.map((d) => (
            <tr key={d.model} className="h-[18px] leading-none">
              <td className="p-0 pl-2 text-[#888]">
                <span className="flex items-center gap-2">
                  <Line className="size-[10px] text-[#8f8f8f]" width={1.600}>
                    {d.art}
                  </Line>
                  {d.model}
                </span>
              </td>
              <td className="p-0 pl-px font-medium text-[#111]">{d.name}</td>
              <td className="p-0 pl-px text-[#8f8f8f]">{d.place}</td>
              <td className="p-0 pl-px text-[#b0b0b0]">
                {d.seen || (
                  <span className="flex items-center gap-1 text-[#0095ff]">
                    <CheckDot />
                    Current Device
                  </span>
                )}
              </td>
              <td className="p-0">
                <button aria-label={`Remove ${d.name}`} className="-mr-[2px] ml-auto block w-3">
                  <X className="size-[12px] text-[#808080]" strokeWidth={1.600} />
                </button>
              </td>
            </tr>
          ))}
        </tbody>
      </table>
      <SectionHead title="User Activity" className="mt-[18px]">
        <PillButton>SEE ALL</PillButton>
      </SectionHead>
      <table className="mt-[6px] w-full table-fixed border-collapse text-left">
        <colgroup>
          <col className="w-[26%]" />
          <col className="w-[19%]" />
          <col className="w-[23%]" />
          <col />
          <col className="w-[6%]" />
        </colgroup>
        <thead>
          <tr className="h-[19px] text-[9px] leading-none text-[#999]">
            <th scope="col" className="p-0 pl-2 font-normal">Device</th>
            <th scope="col" className="p-0 font-normal">IP</th>
            <th scope="col" className="p-0 font-normal">Activity</th>
            <th scope="col" className="p-0 font-normal">Date &amp; Time</th>
            <th scope="col" className="p-0 text-center font-normal">Status</th>
          </tr>
        </thead>
        <tbody>
          {ACTIVITY.map(([device, ip, what, when, on]) => (
            <tr key={when} className="h-[19px] text-[8px] font-medium leading-none text-[#1c1c1c]">
              <td className="p-0 pl-2">{device}</td>
              <td className="p-0">{ip}</td>
              <td className="p-0">{what}</td>
              <td className="p-0">{when}</td>
              <td className="p-0 text-center">
                <CheckDot on={on} />
              </td>
            </tr>
          ))}
        </tbody>
      </table>
      <div className="mt-3 flex items-start justify-between">
        <SectionHead title="Regions, Overseas Block" className="mt-[4px]" />
        <div className="flex flex-col items-end text-[10px] text-[#3c3c3c]">
          <div className="flex h-[23px] items-center gap-[10px]">
            Out of Region
            <Toggle label="Out of Region" />
          </div>
          <div className="flex h-[23px] items-center gap-[10px]">
            Overseas
            <Toggle label="Overseas" on />
          </div>
        </div>
      </div>
    </BrowserWindow>
  );
}

export default function App() {
  return (
    <div className="grid min-h-screen auto-rows-fr grid-cols-2 gap-x-10 gap-y-[11px] bg-[#4a4a4a] px-70 pb-[18px] pt-[17px] font-['Lato','Open_Sans',sans-serif]">
      <SearchSettings />
      <HistorySettings />
      <AssistantSettings />
      <AssistantFiltered />
      <AdvertisementSettings />
      <PrivacySettings />
    </div>
  );
}
